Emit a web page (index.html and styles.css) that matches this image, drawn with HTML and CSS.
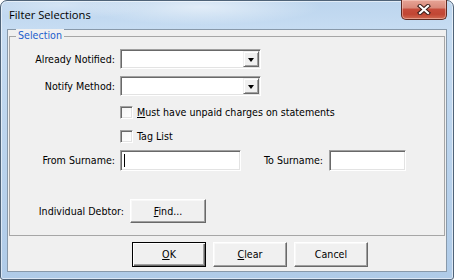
FILE: index.html
```html
<!DOCTYPE html>
<html>
<head>
<meta charset="utf-8">
<title>Filter Selections</title>
<link rel="stylesheet" href="styles.css">
</head>
<body>
<div class="window">
  <div class="titlebar">
    <span class="title">Filter Selections</span>
    <div class="close">
      <svg width="14" height="11" viewBox="0 0 14 11">
        <path d="M3 2 L11 9 M11 2 L3 9" stroke="#3a1c18" stroke-width="4.2" stroke-linecap="square"/>
        <path d="M3 2 L11 9 M11 2 L3 9" stroke="#ffffff" stroke-width="2.2" stroke-linecap="square"/>
      </svg>
    </div>
  </div>
  <div class="client">
    <div class="group">
      <span class="legend">Selection</span>
      <div class="row r-combo1">
        <span class="lbl">Already Notified:</span>
        <div class="combo sunk"><span class="combo-field"></span><span class="drop raised"><span class="arrow"></span></span></div>
      </div>
      <div class="row r-combo2">
        <span class="lbl">Notify Method:</span>
        <div class="combo sunk"><span class="combo-field"></span><span class="drop raised"><span class="arrow"></span></span></div>
      </div>
      <div class="row r-check1">
        <span class="check sunk"></span>
        <span class="check-text"><u>M</u>ust have unpaid charges on statements</span>
      </div>
      <div class="row r-check2">
        <span class="check sunk"></span>
        <span class="check-text">Tag List</span>
      </div>
      <div class="row r-surname">
        <span class="lbl">From Surname:</span>
        <div class="text from sunk"><span class="caret"></span></div>
        <span class="lbl lbl-to">To Surname:</span>
        <div class="text to sunk"></div>
      </div>
      <div class="row r-find">
        <span class="lbl lbl-find">Individual Debtor:</span>
        <div class="btn find raised-btn"><span><u>F</u>ind...</span></div>
      </div>
    </div>
    <div class="buttons">
      <div class="btn default"><span><u>O</u>K</span></div>
      <div class="btn raised-btn"><span><u>C</u>lear</span></div>
      <div class="btn raised-btn"><span>Cancel</span></div>
    </div>
  </div>
</div>
</body>
</html>
```

FILE: styles.css
```css
* { box-sizing: border-box; }

html, body {
  margin: 0;
  padding: 0;
  width: 454px;
  height: 280px;
  overflow: hidden;
  background: #ffffff;
}

.window {
  width: 454px;
  height: 280px;
  border: 1px solid #4f6378;
  border-radius: 7px 7px 3px 3px;
  padding: 0 6px 7px 6px;
  display: flex;
  flex-direction: column;
  background:
    radial-gradient(ellipse 120px 18px at 200px 6px, rgba(255,255,255,0.55), rgba(255,255,255,0) 100%),
    radial-gradient(ellipse 90px 14px at 60px 4px, rgba(255,255,255,0.35), rgba(255,255,255,0) 100%),
    linear-gradient(to bottom, #bcd5ee 0%, #c6dcf2 10%, #b9d2ec 60%, #afcbe8 100%);
  box-shadow: inset 0 0 0 1px rgba(255,255,255,0.55);
}

.titlebar {
  height: 28px;
  display: flex;
  justify-content: space-between;
  align-items: flex-start;
}

.title {
  font-family: "Open Sans", "Noto Sans", sans-serif;
  font-size: 11.2px;
  line-height: 15px;
  color: #000;
  padding: 6px 0 0 2px;
}

.close {
  width: 46px;
  height: 20px;
  margin-top: -1px;
  border: 1px solid #5f2a22;
  border-top: none;
  border-radius: 0 0 5px 5px;
  background: linear-gradient(to bottom, #e7a496 0%, #d98a7b 40%, #c64c3b 50%, #c14634 75%, #d06a52 100%);
  box-shadow: inset 0 0 0 1px rgba(255,220,210,0.45);
  display: flex;
  align-items: center;
  justify-content: center;
}

.client {
  height: 243px;
  border: 1px solid #8899aa;
  background: #f0f0f0;
  display: flex;
  flex-direction: column;
  padding: 6px 1px 4px 1px;
  font-family: "DejaVu Sans Condensed", "DejaVu Sans", sans-serif;
  font-size: 10.6px;
  color: #000;
}

.group {
  position: relative;
  border: 1px solid #a6a6a6;
  padding: 12px 0 12px 0;
  display: flex;
  flex-direction: column;
}

.legend {
  position: absolute;
  top: -8px;
  left: 6px;
  padding: 0 2px;
  line-height: 13px;
  background: #f0f0f0;
  color: #1c5fcc;
}

.row {
  display: flex;
  align-items: center;
}

.lbl {
  width: 110px;
  padding-right: 5px;
  text-align: right;
  white-space: nowrap;
  line-height: 13px;
}

.r-combo1 { height: 20px; }
.r-combo2 { height: 20px; margin-top: 7px; }
.r-check1 { height: 13px; margin-top: 10px; padding-left: 110px; }
.r-check2 { height: 13px; margin-top: 11px; padding-left: 110px; }
.r-surname { height: 21px; margin-top: 7px; }
.r-find { height: 24px; margin-top: 28px; }

.sunk {
  background: #ffffff;
  border-style: solid;
  border-width: 1px;
  border-color: #a0a0a0 #ffffff #ffffff #a0a0a0;
  box-shadow: inset 1px 1px 0 #696969, inset -1px -1px 0 #e3e3e3;
}

.combo {
  width: 141px;
  height: 20px;
  display: flex;
  padding: 1px;
}

.combo-field { flex: 1; }

.raised {
  background: #f0f0f0;
  border-style: solid;
  border-width: 1px;
  border-color: #f0f0f0 #696969 #696969 #f0f0f0;
  box-shadow: inset 1px 1px 0 #ffffff, inset -1px -1px 0 #a0a0a0;
}

.drop {
  width: 16px;
  height: 16px;
  display: flex;
  align-items: center;
  justify-content: center;
  padding-top: 1px;
}

.arrow {
  width: 0;
  height: 0;
  border-left: 3.5px solid transparent;
  border-right: 3.5px solid transparent;
  border-top: 4px solid #000;
}

.check {
  width: 13px;
  height: 13px;
  flex: none;
  background: linear-gradient(135deg, #f4f4f4, #ffffff);
}

.check-text {
  margin-left: 4px;
  line-height: 13px;
  white-space: nowrap;
}

.text {
  height: 21px;
  padding: 3px 2px;
}

.text.from { width: 121px; }
.text.to { width: 77px; }

.caret {
  display: block;
  width: 1px;
  height: 13px;
  background: #000;
  margin-left: 1px;
}

.lbl-to {
  width: 88px;
  padding-right: 6px;
}

.lbl-find {
  width: 120px;
  padding-right: 6px;
}

.btn {
  height: 24px;
  display: flex;
  align-items: center;
  justify-content: center;
  background: #f0f0f0;
  line-height: 13px;
}

.raised-btn {
  border-style: solid;
  border-width: 1px;
  border-color: #ffffff #696969 #696969 #ffffff;
  box-shadow: inset -1px -1px 0 #a0a0a0, inset 1px 1px 0 #f8f8f8;
}

.find { width: 76px; }

.buttons {
  margin-top: 6px;
  padding-left: 123px;
  display: flex;
  gap: 7px;
}

.buttons .btn {
  width: 74px;
  height: 25px;
}

.default {
  border: 1px solid #000;
  box-shadow: inset 1px 1px 0 #ffffff, inset -1px -1px 0 #696969, inset -2px -2px 0 #a0a0a0;
}

u { text-decoration: underline; text-underline-offset: 1px; }
```
